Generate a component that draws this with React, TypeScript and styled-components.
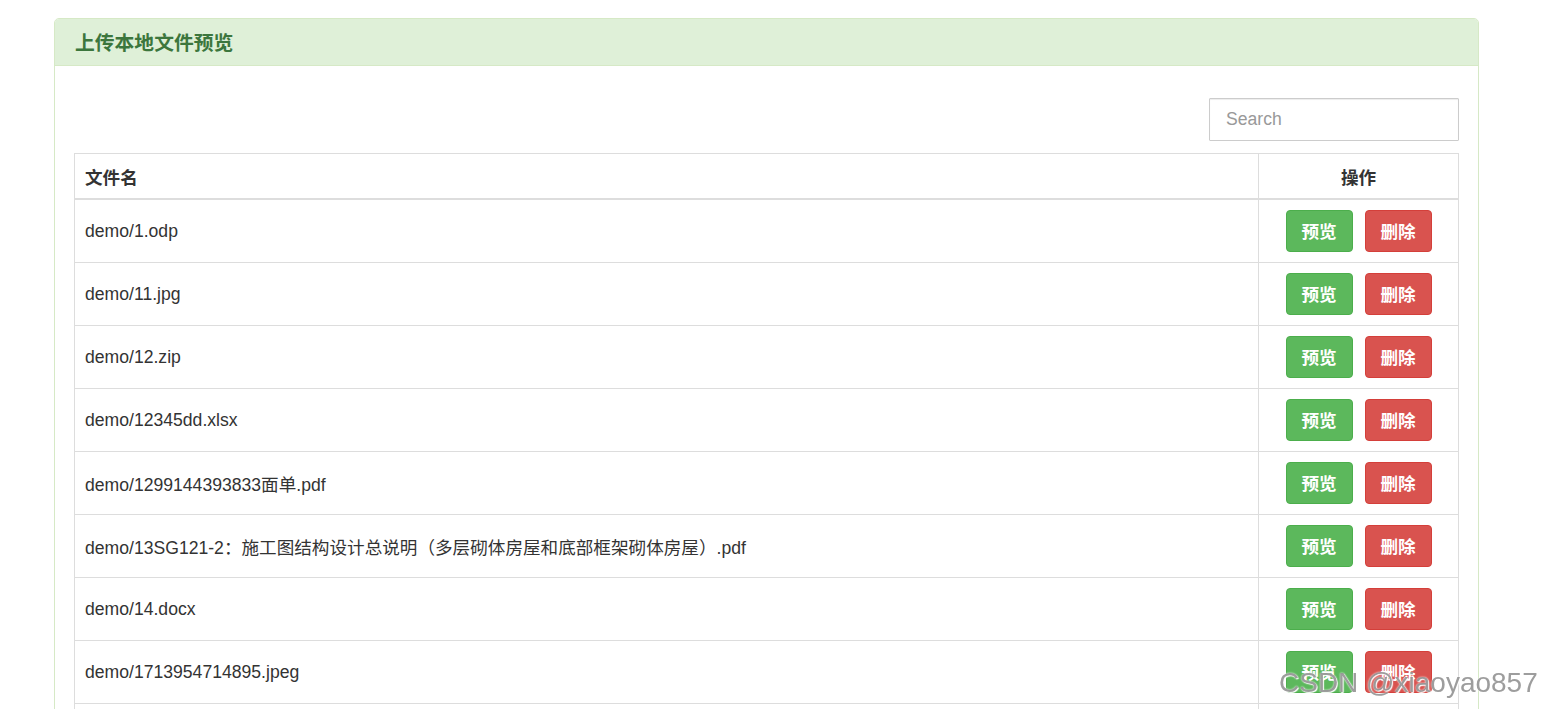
import React from "react";
import styled, { createGlobalStyle } from "styled-components";

const Global = createGlobalStyle`
  html, body {
    margin: 0;
    padding: 0;
    overflow: hidden;
    background: #fff;
  }
  body {
    font-family: "Liberation Sans", "Noto Sans CJK SC", sans-serif;
    color: #333;
    font-size: 17.6px;
  }
`;

const Page = styled.div`
  padding: 18px 64px 0 54px;
`;

const Panel = styled.section`
  border: 1px solid #d6e9c6;
  border-radius: 5px;
  background: #fff;
`;

const PanelHeading = styled.header`
  height: 47px;
  box-sizing: border-box;
  display: flex;
  align-items: center;
  padding: 0 20px 2px 20px;
  background: #dff0d8;
  border-bottom: 1px solid #d6e9c6;
  border-radius: 4px 4px 0 0;
  color: #3c763d;
  font-size: 19.8px;
  font-weight: 700;
`;

const PanelBody = styled.div`
  padding: 32px 19px 0 19px;
`;

const Toolbar = styled.div`
  display: flex;
  justify-content: flex-end;
  margin-bottom: 12px;
`;

const SearchInput = styled.input`
  width: 250px;
  height: 43px;
  box-sizing: border-box;
  border: 1px solid #ccc;
  border-radius: 1px;
  padding: 0 16px;
  font-family: inherit;
  font-size: 17.6px;
  color: #555;
  box-shadow: inset 0 1px 1px rgba(0, 0, 0, 0.075);
  outline: none;
  &::placeholder {
    color: #999;
  }
`;

const Table = styled.div`
  border: 1px solid #ddd;
  border-bottom: none;
`;

const Row = styled.div<{ $head?: boolean }>`
  display: grid;
  grid-template-columns: 1fr 200px;
  height: ${(p) => (p.$head ? "46px" : "63px")};
  box-sizing: border-box;
  border-bottom: ${(p) => (p.$head ? "2px" : "1px")} solid #ddd;
`;

const Cell = styled.div<{ $center?: boolean; $head?: boolean }>`
  display: flex;
  align-items: center;
  justify-content: ${(p) => (p.$center ? "center" : "flex-start")};
  gap: 12px;
  padding: 0 10px;
  font-weight: ${(p) => (p.$head ? 700 : 400)};
  color: #333;
  & + & {
    border-left: 1px solid #ddd;
  }
`;

const Button = styled.button<{ $variant: "success" | "danger" }>`
  width: 67px;
  height: 42px;
  box-sizing: border-box;
  border-radius: 4px;
  border: 1px solid ${(p) => (p.$variant === "success" ? "#4cae4c" : "#d43f3a")};
  background: ${(p) => (p.$variant === "success" ? "#5cb85c" : "#d9534f")};
  color: #fff;
  font-family: "Liberation Sans", "Noto Sans CJK SC", sans-serif;
  font-size: 17.6px;
  font-weight: 600;
  padding: 0 0 1px 0;
  cursor: pointer;
`;

const Watermark = styled.div`
  position: fixed;
  left: 1279px;
  top: 669px;
  font-family: "Liberation Sans", sans-serif;
  font-size: 28px;
  line-height: 28px;
  color: rgba(140, 140, 140, 0.85);
  text-shadow: 0 0 2px #fff, 1px 1px 1px #fff;
  white-space: nowrap;
  pointer-events: none;
`;

const files = [
  "demo/1.odp",
  "demo/11.jpg",
  "demo/12.zip",
  "demo/12345dd.xlsx",
  "demo/1299144393833面单.pdf",
  "demo/13SG121-2：施工图结构设计总说明（多层砌体房屋和底部框架砌体房屋）.pdf",
  "demo/14.docx",
  "demo/1713954714895.jpeg",
  "demo/2.pptx",
];

export default function App() {
  return (
    <>
      <Global />
      <Page>
        <Panel>
          <PanelHeading>上传本地文件预览</PanelHeading>
          <PanelBody>
            <Toolbar>
              <SearchInput placeholder="Search" />
            </Toolbar>
            <Table>
              <Row $head>
                <Cell $head>文件名</Cell>
                <Cell $head $center>操作</Cell>
              </Row>
              {files.map((f) => (
                <Row key={f}>
                  <Cell>{f}</Cell>
                  <Cell $center>
                    <Button $variant="success">预览</Button>
                    <Button $variant="danger">删除</Button>
                  </Cell>
                </Row>
              ))}
            </Table>
          </PanelBody>
        </Panel>
      </Page>
      <Watermark>CSDN @xiaoyao857</Watermark>
    </>
  );
}
